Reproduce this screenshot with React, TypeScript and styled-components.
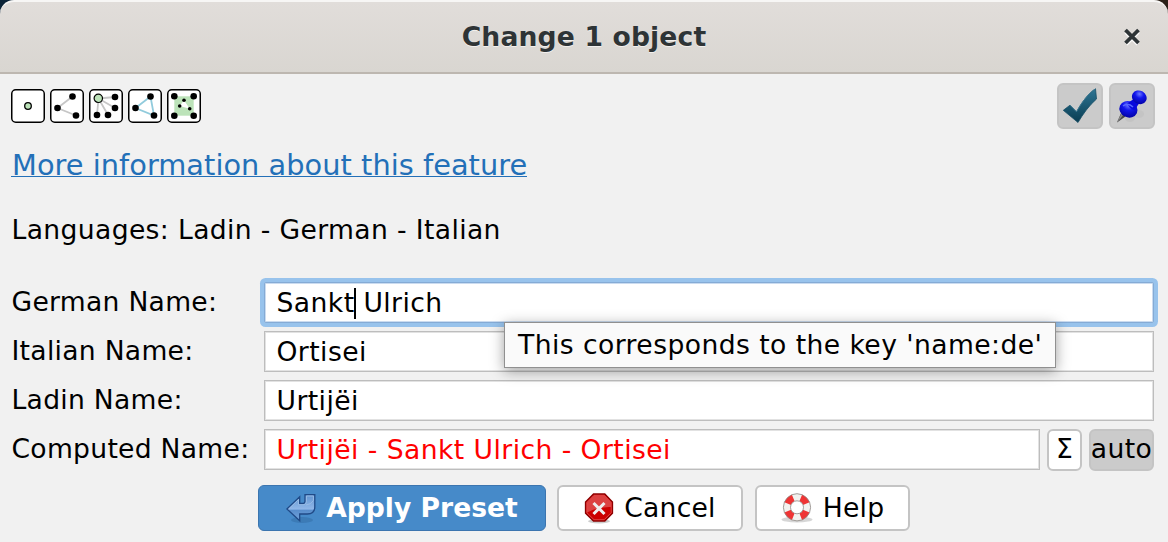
import React from "react";
import styled, { createGlobalStyle, css } from "styled-components";

const Global = createGlobalStyle`
  *, *::before, *::after { box-sizing: border-box; }
  body { margin: 0; background: #101c28; overflow: hidden; }
`;

const Dialog = styled.main`
  width: 1168px;
  height: 542px;
  display: flex;
  flex-direction: column;
  background: linear-gradient(90deg, #0c2438 50%, #2b2018 50%);
  color: #000;
  font: 26.6px/32px "DejaVu Sans", sans-serif;
  white-space: pre;
`;

const TitleBar = styled.header`
  display: grid;
  grid-template-columns: 72px 1fr 72px;
  align-items: center;
  height: 74px;
  flex: none;
  border-top: 2px solid #f7f6f5;
  border-bottom: 2px solid #bdb7b0;
  border-radius: 14px 14px 0 0;
  background: linear-gradient(#e1ddda, #d9d6d1);
  color: #2e3436;
`;

const Title = styled.h1`
  grid-column: 2;
  margin: 0;
  text-align: center;
  font-size: 26.6px;
  letter-spacing: 0.15px;
  line-height: 32px;
  font-weight: 700;
  text-shadow: 0 1px 0 #f2f0ee;
`;

const CloseButton = styled.button`
  display: flex;
  justify-content: center;
  border: 0;
  padding: 0;
  background: none;
`;

const Content = styled.section`
  flex: 1;
  display: flex;
  flex-direction: column;
  background: #f1f1f1;
  padding: 9px 13px 0 11px;
`;

const Toolbar = styled.div`
  display: flex;
  justify-content: space-between;
  align-items: center;
  height: 46px;
`;

const Group = styled.div<{ $gap: number }>`
  display: flex;
  gap: ${(p) => p.$gap}px;
`;

const face = css`
  display: flex;
  align-items: center;
  justify-content: center;
  flex: none;
  font: inherit;
  color: #000;
  padding: 0;
  border: 2px solid #c4c4c4;
  border-radius: 6px;
`;

const ToggleButton = styled.button`
  ${face}
  width: 46px;
  height: 46px;
  background: #cbcbcb;
`;

const InfoLink = styled.a`
  align-self: flex-start;
  margin-top: 20px;
  font-size: 28.8px;
  letter-spacing: 0.04px;
  color: #2370b8;
  border-bottom: 1px solid #2370b8;
  height: 28px;
  line-height: 32px;
  padding-left: 1px;
`;

const Note = styled.p`
  margin: 37px 0 0 0.5px;
  letter-spacing: 0.36px;
`;

const Form = styled.div`
  position: relative;
  display: flex;
  flex-direction: column;
  gap: 8px;
  margin: 36px 1px 0 0;
`;

const Row = styled.label`
  display: flex;
  align-items: center;
  height: 41px;
`;

const Label = styled.span`
  width: 253px;
  padding: 0 0 2px 0.5px;
  flex: none;
  letter-spacing: 0.28px;
`;

const Field = styled.div<{ $focused?: boolean; $color?: string }>`
  display: flex;
  align-items: center;
  flex: 1;
  height: 41px;
  padding-left: 11.5px;
  padding-top: 1px;
  background: #fff;
  letter-spacing: 0.43px;
  color: ${(p) => p.$color ?? "#000"};
  border: 1px solid ${(p) => (p.$focused ? "#85abd5" : "#bdbdbd")};
  box-shadow: ${(p) =>
    p.$focused
      ? "inset 0 0 0 1px #cbdcf0, 0 0 0 4px #98c3ec"
      : "inset 0 0 0 1px #e2e2e2"};
  border-radius: ${(p) => (p.$focused ? 2 : 0)}px;
`;

const Caret = styled.i`
  width: 2px;
  height: 31px;
  margin: 0 -1px;
  background: #000;
`;

const SmallButton = styled.button<{ $width: number; $pressed?: boolean }>`
  ${face}
  width: ${(p) => p.$width}px;
  height: 42px;
  margin-left: 7px;
  padding-bottom: 1px;
  letter-spacing: 0.4px;
  background: ${(p) => (p.$pressed ? "#cbcbcb" : "#fff")};
`;

const Tooltip = styled.div`
  position: absolute;
  left: 493px;
  top: 40px;
  width: 552px;
  height: 46px;
  padding: 6px 0 0 13px;
  border: 1.5px solid #909090;
  background: #fafafa;
  letter-spacing: 0.43px;
  box-shadow: 0 3px 13px rgba(0, 0, 0, 0.38);
`;

const Actions = styled.footer`
  display: flex;
  gap: 12px;
  margin: 15px 0 0 247px;
`;

const ActionButton = styled.button<{ $width: number; $primary?: boolean }>`
  ${face}
  width: ${(p) => p.$width}px;
  height: 46px;
  gap: 10px;
  letter-spacing: 0.2px;
  background: ${(p) => (p.$primary ? "#468ac9" : "#fff")};
  ${(p) =>
    p.$primary &&
    css`
      color: #fff;
      font-weight: 700;
      letter-spacing: 0;
      border: 1.5px solid #3c75af;
      margin-right: -1px;
    `}
`;

type Pt = [number, number, number?];

function GeometryIcon({ children, dots }: { children?: React.ReactNode; dots: Pt[] }) {
  return (
    <svg width="34" height="34" viewBox="0 0 34 34">
      <rect x=".75" y=".75" width="32.5" height="32.5" rx="4" fill="#fff" stroke="#000" strokeWidth="1.5" />
      {children}
      {dots.map(([x, y, r], i) => (
        <circle key={i} cx={x} cy={y} r={r ?? 3.3} />
      ))}
    </svg>
  );
}

function GeometryIcons() {
  return (
    <Group $gap={5}>
      <GeometryIcon dots={[]}>
        <circle cx="17" cy="17" r="3.3" fill="#bce3b9" stroke="#000" strokeWidth="1.3" />
      </GeometryIcon>
      <GeometryIcon dots={[[22.5, 7.5], [7.5, 19], [26, 26.5]]}>
        <path d="M22.5 7.5 7.5 19 26 26.5" fill="none" stroke="#c6c6c6" strokeWidth="1.8" />
      </GeometryIcon>
      <GeometryIcon dots={[[26, 8], [26, 19], [8, 26], [19, 26]]}>
        <path d="M9.5 9.5 26 8M9.5 9.5 26 19M9.5 9.5 8 26M9.5 9.5 19 26" stroke="#c6c6c6" strokeWidth="1.8" />
        <circle cx="9.3" cy="9.3" r="4.2" fill="#bce3b9" stroke="#000" strokeWidth="1.2" />
      </GeometryIcon>
      <GeometryIcon dots={[[22.5, 7.5], [7.5, 19], [26, 26.5]]}>
        <path d="M22.5 7.5 7.5 19 26 26.5Z" fill="none" stroke="#91cbdc" strokeWidth="1.8" />
      </GeometryIcon>
      <GeometryIcon
        dots={[[7.3, 7.3], [26.7, 7.3], [7.3, 26.7], [26.7, 26.7], [17, 11.3, 1.8], [12.7, 17, 1.8], [22.7, 19.7, 1.8]]}
      >
        <path d="M7.3 7.3h19.4v19.4H7.3z" fill="#bce3b9" />
        <path d="m17 11.3-4.3 5.7 10 2.7z" fill="#fff" />
      </GeometryIcon>
    </Group>
  );
}

const CloseIcon = () => (
  <svg width="18" height="18" viewBox="0 0 18 18">
    <path d="m3 4 12 12M15 4 3 16" stroke="#faf9f8" strokeWidth="4.2" />
    <path d="m2.5 2 13 13M15.5 2l-13 13" stroke="#2e3436" strokeWidth="3.8" />
  </svg>
);

const CheckIcon = () => (
  <svg width="36" height="36" viewBox="0 0 36 36">
    <defs>
      <linearGradient id="check" x1="0" y1="0" x2="0" y2="1">
        <stop offset="0" stopColor="#2e7594" />
        <stop offset="1" stopColor="#093d52" />
      </linearGradient>
    </defs>
    <path
      d="M1.3 22.3 8 17.2l6.5 6.6C19.5 15 26 5.5 33.5.8l1 10.2C27 17.5 21 26 16 34.5Z"
      fill="url(#check)"
      stroke="#164e66"
      strokeWidth=".8"
    />
    <path d="M33.5.8C26 5.5 19.5 15 14.5 23.8L8 17.2" fill="none" stroke="#3f7f99" strokeWidth=".8" />
  </svg>
);

const PinIcon = () => (
  <svg width="36" height="36" viewBox="0 0 36 36">
    <defs>
      <radialGradient id="pin" cx=".4" cy=".28" r=".75">
        <stop offset="0" stopColor="#6a77ff" />
        <stop offset=".4" stopColor="#1216ed" />
        <stop offset="1" stopColor="#0202a5" />
      </radialGradient>
    </defs>
    <ellipse cx="16" cy="30" rx="5" ry="4" fill="#bdbdbd" opacity=".55" />
    <ellipse cx="25" cy="26" rx="5" ry="4" fill="#bdbdbd" opacity=".45" />
    <path d="m7.5 24 4 4.5L3 34.5Z" fill="#4a4a4a" />
    <path d="m7.5 25-4.5 9.500 6-7Z" fill="#888" />
    <ellipse cx="14.6" cy="21.400" rx="9.300" ry="8" transform="rotate(25 14.6 21)" fill="url(#pin)" />
    <path d="m13 15.500 7.500-5 4.500 5-4 6q-4 1-8-6Z" fill="#0808dc" />
    <path d="M9 18q5-4 10 1" fill="none" stroke="#5968ff" strokeWidth="1.5" />
    <ellipse cx="25.3" cy="9.300" rx="7.600" ry="6.600" transform="rotate(30 25.3 9.3)" fill="url(#pin)" />
  </svg>
);

const ApplyIcon = () => (
  <svg width="30" height="32" viewBox="0 0 30 32">
    <defs>
      <linearGradient id="apply" x1="0" y1="0" x2="0" y2="1">
        <stop offset="0" stopColor="#5f93d0" />
        <stop offset=".55" stopColor="#90b7e8" />
        <stop offset=".6" stopColor="#588dcc" />
        <stop offset="1" stopColor="#75a5dc" />
      </linearGradient>
    </defs>
    <ellipse cx="16" cy="28" rx="11" ry="3" fill="#2c639b" opacity=".4" />
    <path
      d="M.9 17 13.7 4.8v6.7h3.1q2.2 0 2.200-2.2V2.6h9.8v12.2q0 7.2-7.5 7.2h-7.6v6.8Z"
      fill="url(#apply)"
      stroke="#204a87"
      strokeWidth="1.3"
    />
    <path d="M2.8 17 12.5 7.5v5.2H18q2.5-1 2.4-3V4h7v4.5q-2 4-7.4 4.5" fill="none" stroke="#9bbde5" strokeWidth=".9" />
  </svg>
);

const CancelIcon = () => (
  <svg width="30" height="32" viewBox="0 0 30 32">
    <ellipse cx="15" cy="29.2" rx="11" ry="2.2" fill="#aaa" opacity=".6" />
    <path d="M9.5 2h11.3l7.7 8v11.2L20.8 29H9.5L1.5 21.2V10Z" fill="#cc0000" stroke="#8b0000" strokeWidth="1.3" />
    <path d="M10 3.4h10.3l6.8 7V15Q15 14.5 3 20.5V10.6Z" fill="#e56565" opacity=".65" />
    <path d="M10 3.3h10.3l6.9 7.2v10.2l-7 7H10l-7.2-7V10.5Z" fill="none" stroke="#e45353" strokeWidth=".8" />
    <path d="m9.5 11 11 11M20.5 11l-11 11" stroke="#eee" strokeWidth="3" />
  </svg>
);

const HelpIcon = () => (
  <svg width="32" height="32" viewBox="0 0 32 32">
    <ellipse cx="16" cy="27.5" rx="15.5" ry="3" fill="#bbb" opacity=".6" />
    <circle cx="16" cy="15.3" r="10" fill="none" stroke="#f2f2ef" strokeWidth="7.2" />
    <circle
      cx="16"
      cy="15.3"
      r="10"
      fill="none"
      stroke="#ef3434"
      strokeWidth="7.2"
      pathLength="360"
      strokeDasharray="46 44"
      strokeDashoffset="-22"
    />
    <circle cx="16" cy="15.3" r="13.6" fill="none" stroke="#8b8582" strokeWidth=".8" />
    <circle cx="16" cy="15.3" r="6.5" fill="#fff" stroke="#8b8582" strokeWidth=".8" />
  </svg>
);

export default function App() {
  return (
    <>
      <Global />
      <Dialog>
        <TitleBar>
          <Title>Change 1 object</Title>
          <CloseButton aria-label="Close">
            <CloseIcon />
          </CloseButton>
        </TitleBar>
        <Content>
          <Toolbar>
            <GeometryIcons />
            <Group $gap={6}>
              <ToggleButton aria-label="Validate"><CheckIcon /></ToggleButton>
              <ToggleButton aria-label="Pin"><PinIcon /></ToggleButton>
            </Group>
          </Toolbar>
          <InfoLink>More information about this feature</InfoLink>
          <Note>Languages: Ladin - German - Italian</Note>
          <Form>
            <Row>
              <Label>German Name:</Label>
              <Field $focused>Sankt<Caret /> Ulrich</Field>
            </Row>
            <Row>
              <Label>Italian Name:</Label>
              <Field>Ortisei</Field>
            </Row>
            <Row>
              <Label>Ladin Name:</Label>
              <Field>Urtijëi</Field>
            </Row>
            <Row>
              <Label>Computed Name:</Label>
              <Field $color="#f00">Urtijëi - Sankt Ulrich - Ortisei</Field>
              <SmallButton $width={35}>Σ</SmallButton>
              <SmallButton $width={65} $pressed>auto</SmallButton>
            </Row>
            <Tooltip>This corresponds to the key 'name:de'</Tooltip>
          </Form>
          <Actions>
            <ActionButton $width={288} $primary><ApplyIcon />Apply Preset</ActionButton>
            <ActionButton $width={186}><CancelIcon />Cancel</ActionButton>
            <ActionButton $width={155}><HelpIcon />Help</ActionButton>
          </Actions>
        </Content>
      </Dialog>
    </>
  );
}
